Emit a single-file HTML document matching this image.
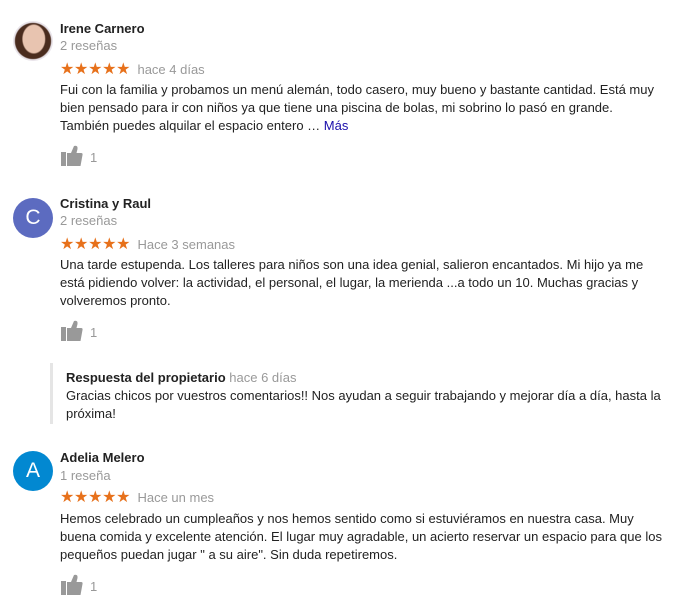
<!DOCTYPE html>
<html><head><meta charset="utf-8"><style>
body{margin:0;width:680px;height:612px;background:#fff;font-family:"Liberation Sans",Arial,sans-serif;font-size:13px;color:#222;position:relative;overflow:hidden}
.a{position:absolute;white-space:nowrap;line-height:18px}
.n{font-weight:bold;color:#222}
.g{color:#999}
.st{color:#e7711b;font-size:16px;letter-spacing:-0.3px}
.av{position:absolute;width:40px;height:40px;border-radius:50%;color:#fff;font-size:21px;text-align:center;line-height:40px}
.m{color:#1a0dab}
</style></head><body>
<div class="av" style="left:13px;top:21px;background:radial-gradient(ellipse 30% 38% at 52% 45%,#e8c4b0 0 90%,transparent 100%),radial-gradient(circle at 50% 50%,#4a2c1e 0 62%,#e9e4ea 66%)"></div>
<div class="a n" style="left:60px;top:20px">Irene Carnero</div>
<div class="a g" style="left:60px;top:37px">2 reseñas</div>
<div class="a" style="left:60px;top:61px"><span class="st">★★★★★</span> <span class="g">&nbsp;hace 4 días</span></div>
<div class="a" style="left:60px;top:81px">Fui con la familia y probamos un menú alemán, todo casero, muy bueno y bastante cantidad. Está muy<br>bien pensado para ir con niños ya que tiene una piscina de bolas, mi sobrino lo pasó en grande.<br>También puedes alquilar el espacio entero … <span class="m">Más</span></div>
<svg style="position:absolute;left:61px;top:145px" width="22" height="21"><rect x="0" y="7" width="5" height="14" fill="#999"/><path d="M6 8 L10 8 L13 1 Q17 0 16.5 4 L15.5 8 L20 8 Q22 8 21.5 10 L19.5 21 L6 21Z" fill="#999"/></svg>
<div class="a g" style="left:90px;top:149px">1</div>

<div class="av" style="left:13px;top:198px;background:#5c6bc0">C</div>
<div class="a n" style="left:60px;top:195px">Cristina y Raul</div>
<div class="a g" style="left:60px;top:212px">2 reseñas</div>
<div class="a" style="left:60px;top:236px"><span class="st">★★★★★</span> <span class="g">&nbsp;Hace 3 semanas</span></div>
<div class="a" style="left:60px;top:256px">Una tarde estupenda. Los talleres para niños son una idea genial, salieron encantados. Mi hijo ya me<br>está pidiendo volver: la actividad, el personal, el lugar, la merienda ...a todo un 10. Muchas gracias y<br>volveremos pronto.</div>
<svg style="position:absolute;left:61px;top:320px" width="22" height="21"><rect x="0" y="7" width="5" height="14" fill="#999"/><path d="M6 8 L10 8 L13 1 Q17 0 16.5 4 L15.5 8 L20 8 Q22 8 21.5 10 L19.5 21 L6 21Z" fill="#999"/></svg>
<div class="a g" style="left:90px;top:324px">1</div>

<div style="position:absolute;left:50px;top:363px;width:3px;height:61px;background:#e5e5e5"></div>
<div class="a" style="left:66px;top:369px"><span class="n">Respuesta del propietario</span> <span class="g">hace 6 días</span></div>
<div class="a" style="left:66px;top:387px">Gracias chicos por vuestros comentarios!! Nos ayudan a seguir trabajando y mejorar día a día, hasta la<br>próxima!</div>

<div class="av" style="left:13px;top:451px;background:#0288d1">A</div>
<div class="a n" style="left:60px;top:449px">Adelia Melero</div>
<div class="a g" style="left:60px;top:467px">1 reseña</div>
<div class="a" style="left:60px;top:489px"><span class="st">★★★★★</span> <span class="g">&nbsp;Hace un mes</span></div>
<div class="a" style="left:60px;top:510px">Hemos celebrado un cumpleaños y nos hemos sentido como si estuviéramos en nuestra casa. Muy<br>buena comida y excelente atención. El lugar muy agradable, un acierto reservar un espacio para que los<br>pequeños puedan jugar " a su aire". Sin duda repetiremos.</div>
<svg style="position:absolute;left:61px;top:574px" width="22" height="21"><rect x="0" y="7" width="5" height="14" fill="#999"/><path d="M6 8 L10 8 L13 1 Q17 0 16.5 4 L15.5 8 L20 8 Q22 8 21.5 10 L19.5 21 L6 21Z" fill="#999"/></svg>
<div class="a g" style="left:90px;top:578px">1</div>
</body></html>
